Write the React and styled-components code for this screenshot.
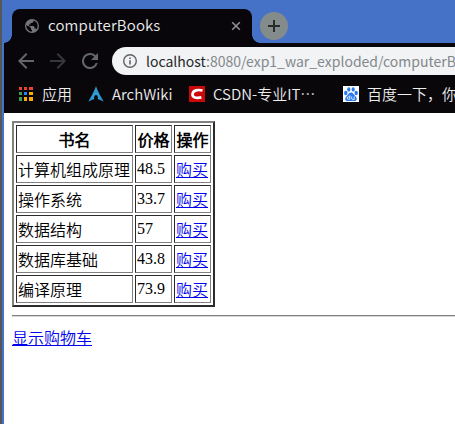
import React from "react";
import styled, { createGlobalStyle } from "styled-components";

const Global = createGlobalStyle`
  *, *::before, *::after { box-sizing: border-box; }
  body { margin: 0; background: #fff; overflow: hidden; }
`;

const Desktop = styled.div`
  display: flex;
  width: 455px;
  height: 424px;
  overflow: hidden;
  background: #4572c7;
  border-left: 2px solid #555658;
`;

const Window = styled.div`
  flex: 1;
  min-width: 0;
  margin-left: 2px;
  display: flex;
  flex-direction: column;
  overflow: hidden;
`;

const uiFont = `"Noto Sans CJK SC", "Noto Sans", sans-serif`;
const cjkSerifPage = `"Liberation Serif", "Noto Sans CJK SC DemiLight", "Noto Sans CJK SC", serif`;

const TabStrip = styled.div`
  display: flex;
  flex: none;
  height: 43px;
  padding: 9px 0 0 8px;
  background: #4572c7;
`;

const Tab = styled.div`
  position: relative;
  display: flex;
  align-items: center;
  width: 240px;
  height: 34px;
  padding: 0 10px 0 12px;
  border-radius: 8px 8px 0 0;
  background: #08060a;
  color: #eceded;
  font: 350 15px/32px ${uiFont};

  &::before, &::after {
    content: "";
    position: absolute;
    bottom: 0;
    width: 8px;
    height: 8px;
  }
  &::before {
    left: -8px;
    background: radial-gradient(circle at 0 0, transparent 7.5px, #08060a 8px);
  }
  &::after {
    right: -8px;
    background: radial-gradient(circle at 100% 0, transparent 7.5px, #08060a 8px);
  }
`;

const TabTitle = styled.span`
  flex: 1;
  height: 34px;
  margin-left: 8px;
  letter-spacing: 0.15px;
  white-space: nowrap;
`;

const NewTab = styled.div`
  display: grid;
  place-items: center;
  width: 28px;
  height: 28px;
  margin: 3px 0 0 8px;
  border-radius: 50%;
  background: #848b8b;
`;

const Toolbar = styled.div`
  display: flex;
  flex: none;
  align-items: center;
  height: 36px;
  padding-left: 14px;
  background: #08060a;
`;

const NavIcon = styled.svg`
  flex: none;
  width: 16px;
  height: 16px;
  margin-right: ${(p) => p.$gap || 16}px;
  fill: ${(p) => p.$color};
`;

const AddressBar = styled.div`
  display: flex;
  flex: 1;
  align-items: center;
  min-width: 0;
  height: 28px;
  padding-left: 10px;
  border-radius: 14px 0 0 14px;
  background: #f1f3f4;
  overflow: hidden;

  svg { flex: none; }
`;

const Url = styled.span`
  margin-left: 8px;
  color: #84888c;
  font: 14px/28px ${uiFont};
  white-space: nowrap;
`;

const Host = styled.span`
  color: #26282b;
`;

const BookmarkBar = styled.div`
  display: flex;
  flex: none;
  align-items: center;
  height: 34px;
  padding: 0 0 4px 14px;
  background: #0a070a;
`;

const Bookmark = styled.div`
  display: flex;
  flex: none;
  align-items: center;
  width: ${(p) => p.$width}px;
  color: #eceded;
  font: 350 15px/28px ${uiFont};
  white-space: nowrap;

  svg { flex: none; margin-right: 8px; }
`;

const Page = styled.main`
  flex: 1;
  padding: 8px 0 0 8px;
  background: #fff;
  color: #000;
  font: 350 16px/24px ${cjkSerifPage};
`;

const BookTable = styled.table`
  width: 203px;
  table-layout: fixed;
  border-collapse: separate;
  border-spacing: 2px;
  border: 2px solid;
  border-color: #808080 #2c2c2c #2c2c2c #808080;
`;

const Row = styled.tr`
  height: 28px;
`;

const cell = `
  height: 28px;
  padding: 3px 1px 0;
  border: 1px solid;
  border-color: #2c2c2c #808080 #808080 #2c2c2c;
  line-height: 23px;
  vertical-align: top;
  white-space: nowrap;
`;

const HeadCell = styled.th`
  ${cell}
  width: ${(p) => p.$width}px;
  text-align: center;
`;

const Cell = styled.td`
  ${cell}
`;

const Price = styled.span`
  display: block;
  line-height: 20px;
`;

const Link = styled.a`
  color: #0000ee;
  text-decoration: underline;
`;

const Divider = styled.hr`
  height: 2px;
  margin: 8px 0 10px;
  border: 0;
  border-top: 1px solid #808080;
  border-bottom: 1px solid #d8d8d8;
`;

const books = [
  ["计算机组成原理", "48.5"],
  ["操作系统", "33.7"],
  ["数据结构", "57"],
  ["数据库基础", "43.8"],
  ["编译原理", "73.9"],
];

const appColors = ["#ea4335", "#ea4335", "#ea4335", "#34a058", "#2684fc", "#fbab08", "#34a058", "#fbab08", "#fbab08"];

const GlobeIcon = () => (
  <svg width="16" height="16" viewBox="0 0 16 16">
    <circle cx="8" cy="8" r="7" fill="#74777a" />
    <path d="M2.200 7.200 5.500 8.600 7 10v1.200l1 1v1.400C4.700 13.500 2.200 11 2.200 7.200ZM9.500 2.500v1.200L8 5H6.500v1.500H5V8h4.500l1 1v1.500h1.300l.8.8c2-2.800 1.300-7.500-3.100-8.800Z" fill="#08060a" />
  </svg>
);

const AppsIcon = () => (
  <svg width="16" height="16" viewBox="0 0 16 16" shapeRendering="crispEdges">
    {appColors.map((c, i) => (
      <rect key={i} x={1 + (i % 3) * 5} y={1 + Math.floor(i / 3) * 5} width={i % 3 === 2 ? 4 : 3} height={i > 5 ? 4 : 3} fill={c} />
    ))}
  </svg>
);

const ArchIcon = () => (
  <svg width="16" height="16" viewBox="0 0 16 16">
    <path d="M8 .3C7 3 5 7.500 .3 15.700c2.500-1.500 4.300-2.300 5.900-2.500-.3-2.600.5-4.100 1.800-4.100s2.100 1.500 1.800 4.100c1.600.2 3.400 1 5.900 2.500C11 7.500 9 3 8 .3Z" fill="#2d9bd5" />
  </svg>
);

const CsdnIcon = () => (
  <svg width="16" height="16" viewBox="0 0 16 16">
    <path d="M0 0h16v16H0Z" fill="#cb0808" />
    <path d="M13.500 4.500C9 3.400 4 3.900 3.500 8.200c-.3 3.600 4 4.200 8.900 3.200" fill="none" stroke="#fff" strokeWidth="2.700" />
  </svg>
);

const BaiduIcon = () => (
  <svg width="16" height="16" viewBox="0 0 16 16">
    <path d="M0 0h16v16H0Z" fill="#fff" />
    <g fill="#2878ee">
      <ellipse cx="2.800" cy="7" rx="1.700" ry="2.200" />
      <ellipse cx="5.800" cy="3.400" rx="1.600" ry="2.200" />
      <ellipse cx="10.200" cy="3.400" rx="1.600" ry="2.200" />
      <ellipse cx="13.200" cy="7" rx="1.700" ry="2.200" />
      <path d="M8 6.500c2 0 2.700 2 4.200 3.400 3 2.600 1.300 5.600-1.500 5.200-2-.3-3.400-.3-5.400 0-2.800.4-4.500-2.600-1.500-5.200C5.300 8.500 6 6.500 8 6.500Z" />
    </g>
    <path d="M6.800 9.300v4H5.300c-1.500 0-1.500-2.400 0-2.400h1.500M8.700 10.500v2.200c0 .6.400.7 1 .7h1.500v-2.900" fill="none" stroke="#fff" strokeWidth=".8" />
  </svg>
);

export default function App() {
  return (
    <Desktop lang="zh-CN">
      <Global />
      <Window>
        <TabStrip>
          <Tab>
            <GlobeIcon />
            <TabTitle>computerBooks</TabTitle>
            <svg width="12" height="12" viewBox="0 0 12 12">
              <path d="m2.200 2.200 7.600 7.600m0-7.600L2.200 9.800" stroke="#8d8f91" strokeWidth="1.600" />
            </svg>
          </Tab>
          <NewTab>
            <svg width="14" height="14" viewBox="0 0 14 14">
              <path d="M7 1v12M1 7h12" stroke="#292c2d" strokeWidth="2" />
            </svg>
          </NewTab>
        </TabStrip>
        <Toolbar>
          <NavIcon viewBox="4 4 16 16" $color="#64676a">
            <path d="M20 11H7.830l5.590-5.590L12 4l-8 8 8 8 1.410-1.410L7.830 13H20v-2z" />
          </NavIcon>
          <NavIcon viewBox="4 4 16 16" $color="#36383b">
            <path d="m12 4-1.410 1.410L16.170 11H4v2h12.170l-5.580 5.590L12 20l8-8z" />
          </NavIcon>
          <NavIcon viewBox="4 4 16 16" $color="#64676a" $gap={14}>
            <path d="M17.650 6.350A7.960 7.960 0 0 0 12 4a8 8 0 1 0 7.730 10h-2.080A6 6 0 1 1 12 6c1.660 0 3.140.69 4.220 1.780L13 11h7V4z" />
          </NavIcon>
          <AddressBar>
            <svg width="16" height="16" viewBox="0 0 16 16">
              <circle cx="8" cy="8" r="6.300" fill="none" stroke="#5f6368" strokeWidth="1.400" />
              <path d="M7.200 4.500h1.600v1.600H7.200ZM7.200 7.200h1.600v4.300H7.200Z" fill="#5f6368" />
            </svg>
            <Url><Host>localhost</Host>:8080/exp1_war_exploded/computerBooks</Url>
          </AddressBar>
        </Toolbar>
        <BookmarkBar>
          <Bookmark $width={70}><AppsIcon />应用</Bookmark>
          <Bookmark $width={101}><ArchIcon />ArchWiki</Bookmark>
          <Bookmark $width={154}><CsdnIcon />CSDN-专业IT…</Bookmark>
          <Bookmark $width={160}><BaiduIcon />百度一下，你就知道</Bookmark>
        </BookmarkBar>
        <Page>
          <BookTable>
            <thead>
              <Row>
                <HeadCell $width={117}>书名</HeadCell>
                <HeadCell $width={37}>价格</HeadCell>
                <HeadCell $width={37}>操作</HeadCell>
              </Row>
            </thead>
            <tbody>
              {books.map(([name, price]) => (
                <Row key={name}>
                  <Cell>{name}</Cell>
                  <Cell><Price>{price}</Price></Cell>
                  <Cell><Link href="#">购买</Link></Cell>
                </Row>
              ))}
            </tbody>
          </BookTable>
          <Divider />
          <Link href="#">显示购物车</Link>
        </Page>
      </Window>
    </Desktop>
  );
}
